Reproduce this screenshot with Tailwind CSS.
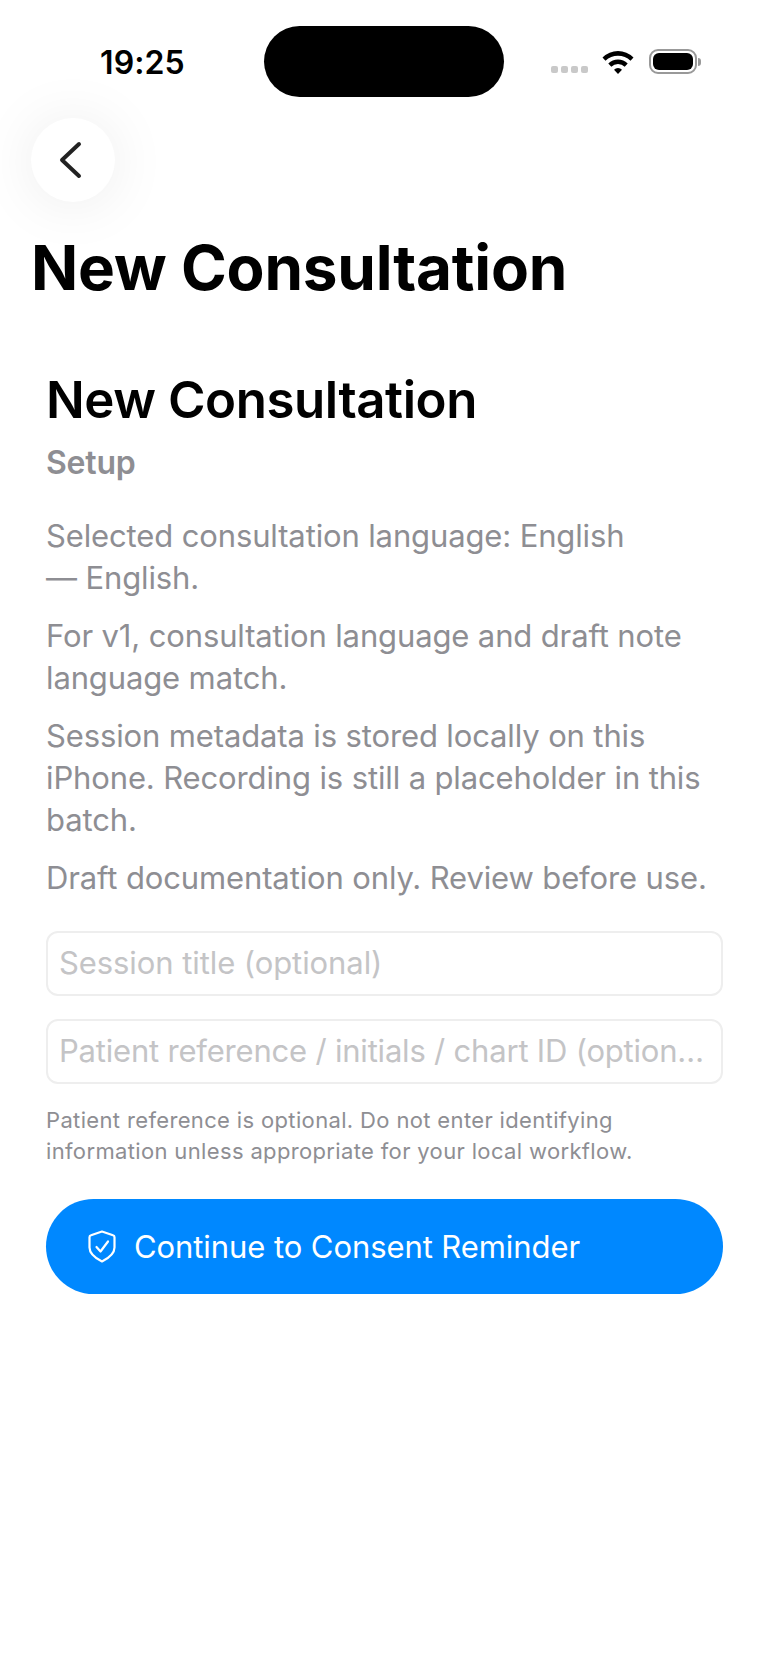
<!DOCTYPE html>
<html lang="en">
<head>
  <meta charset="UTF-8" />
  <meta name="viewport" content="width=device-width, initial-scale=1.0"/>
  <title>New Consultation</title>
  <script src="https://cdn.jsdelivr.net/npm/@tailwindcss/browser@4"></script>
</head>
<body class="bg-white font-['Inter',sans-serif] text-black">
  <div class="w-[768px] h-[1669px] overflow-hidden">

    <!-- status bar -->
    <div class="relative h-[118px]">
      <div class="absolute left-[100px] top-[43px] text-[32px] leading-[40px] font-semibold tracking-[0.1px]">19:25</div>
      <div class="absolute left-[264px] top-[26px] w-[240px] h-[71px] rounded-[36px] bg-black"></div>
      <div class="absolute left-[551px] top-[66px] flex gap-[3px]">
        <span class="w-[7px] h-[7px] rounded-[2px] bg-[#c9c9c9]"></span>
        <span class="w-[7px] h-[7px] rounded-[2px] bg-[#c9c9c9]"></span>
        <span class="w-[7px] h-[7px] rounded-[2px] bg-[#c9c9c9]"></span>
        <span class="w-[7px] h-[7px] rounded-[2px] bg-[#c9c9c9]"></span>
      </div>
      <svg class="absolute left-[601px] top-[49px]" width="34" height="26" viewBox="0 0 34 26">
        <path d="M1.5 8.5 A22 22 0 0 1 32.5 8.5 L29.5 11.8 A17.8 17.8 0 0 0 4.5 11.8 Z" fill="#000"/>
        <path d="M7.3 14.6 A13.8 13.8 0 0 1 26.7 14.6 L23.7 17.8 A9.6 9.6 0 0 0 10.3 17.8 Z" fill="#000"/>
        <path d="M13 20.7 A5.6 5.6 0 0 1 21 20.7 L17 25 Z" fill="#000"/>
      </svg>
      <div class="absolute left-[649px] top-[49px] w-[48px] h-[25px] rounded-[9px] border-2 border-[#999] p-[2px]">
        <div class="w-full h-full rounded-[6px] bg-black"></div>
      </div>
      <div class="absolute left-[698px] top-[58px] w-[3px] h-[8px] rounded-r-[3px] bg-[#999]"></div>
    </div>

    <!-- back button -->
    <div class="ml-[31px] w-[84px] h-[84px] rounded-full bg-white shadow-[0_2px_60px_rgba(0,0,0,0.08)] flex items-center justify-center">
      <svg class="mr-[6px]" width="24" height="38" viewBox="0 0 24 38" fill="none" stroke="#222" stroke-width="4" stroke-linecap="round" stroke-linejoin="round">
        <path d="M21 3 L4 19 L21 35"/>
      </svg>
    </div>

    <h1 class="ml-[31px] mt-[28px] text-[62px] leading-[76px] font-bold tracking-[-0.2px]">New Consultation</h1>

    <div class="pl-[46px] pr-[45px] mt-[64px]">
      <h2 class="text-[51px] leading-[60px] font-semibold tracking-[-0.45px]">New Consultation</h2>
      <div class="mt-[13px] text-[32px] leading-[40px] font-semibold tracking-[-0.2px] text-[#8e8e93]">Setup</div>

      <div class="mt-[32px] flex flex-col gap-[16px] text-[31px] leading-[42px] tracking-[-0.13px] text-[#8e8e93]">
        <p>Selected consultation language: English<br>— English.</p>
        <p>For v1, consultation language and draft note language match.</p>
        <p>Session metadata is stored locally on this iPhone. Recording is still a placeholder in this batch.</p>
        <p>Draft documentation only. Review before use.</p>
      </div>

      <div class="mt-[32px] h-[65px] rounded-[12px] border-2 border-[#eeeeee] flex items-center px-[11px] text-[31px] tracking-[-0.08px] text-[#c4c4c6]">Session title (optional)</div>
      <div class="mt-[23px] h-[65px] rounded-[12px] border-2 border-[#eeeeee] flex items-center px-[11px] text-[31px] tracking-[-0.2px] text-[#c4c4c6]">
        <span class="truncate">Patient reference / initials / chart ID (optional)</span>
      </div>

      <p class="mt-[21px] text-[22px] leading-[31px] tracking-[0.35px] text-[#8e8e93]">Patient reference is optional. Do not enter identifying information unless appropriate for your local workflow.</p>

      <div class="mt-[32px] h-[95px] rounded-[48px] bg-[#0088ff] flex items-center pl-[42px] gap-[18px] text-white">
        <svg width="28" height="33" viewBox="0 0 28 33" fill="none" stroke="#fff" stroke-width="2.2" stroke-linecap="round" stroke-linejoin="round">
          <path d="M14 1.5 L25 5.2 C26 5.5 26.5 6.2 26.5 7.2 V17.5 C26.5 23.5 21 28 14 31.5 C7 28 1.5 23.5 1.5 17.5 V7.2 C1.5 6.2 2 5.5 3 5.2 Z"/>
          <path d="M8.5 17 L12.5 21.5 L20 11.5"/>
        </svg>
        <span class="text-[31px] leading-[40px] tracking-[-0.08px]">Continue to Consent Reminder</span>
      </div>
    </div>
  </div>
</body>
</html>
